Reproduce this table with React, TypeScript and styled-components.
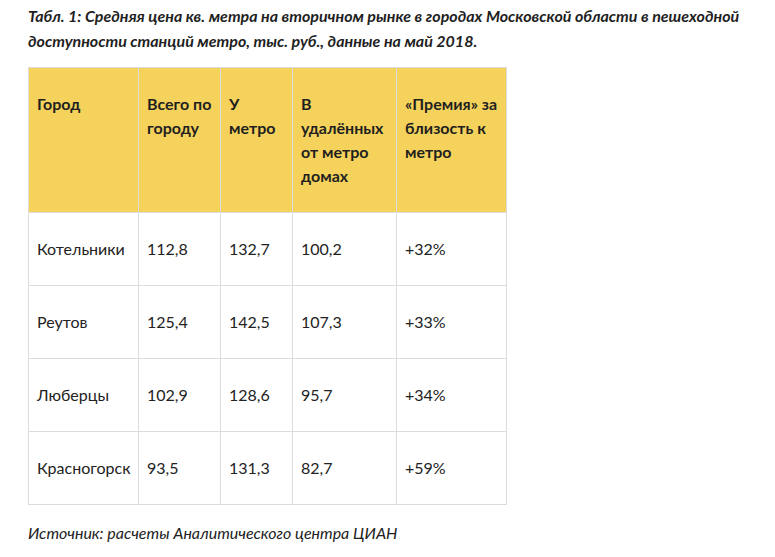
import React from "react";
import styled, { createGlobalStyle } from "styled-components";

const Global = createGlobalStyle`
  html, body { margin: 0; padding: 0; background: #ffffff; }
  body { font-family: Lato, "Noto Sans", sans-serif; color: #222222; }
`;

const Page = styled.div`
  padding: 3px 28px 0 28px;
`;

const Caption = styled.p`
  margin: 0;
  font-size: 16px;
  line-height: 25px;
  font-weight: 700;
  font-style: italic;
  color: #1f1f1f;
  max-width: 720px;
`;

const Table = styled.table`
  margin-top: 14px;
  border-collapse: collapse;
  table-layout: fixed;
  width: 479px;
  font-size: 16px;
  line-height: 24px;
`;

const HeadCell = styled.th`
  background: #f5d25b;
  border: 1px solid #dcdcdc;
  padding: 24px 8px 24px 8px;
  text-align: left;
  vertical-align: top;
  font-weight: 700;
  color: #1f1f1f;
`;

const Cell = styled.td`
  border: 1px solid #dcdcdc;
  padding: 24px 8px;
  text-align: left;
  vertical-align: middle;
  font-weight: 400;
  color: #222222;
  white-space: nowrap;
`;

const Source = styled.p`
  margin: 16px 0 0 0;
  font-size: 16px;
  line-height: 24px;
  font-style: italic;
  color: #222222;
`;

const widths = [110, 82, 72, 104, 110];
const heads = [
  "Город",
  "Всего по городу",
  "У метро",
  "В удалённых от метро домах",
  "«Премия» за близость к метро",
];
const rows = [
  ["Котельники", "112,8", "132,7", "100,2", "+32%"],
  ["Реутов", "125,4", "142,5", "107,3", "+33%"],
  ["Люберцы", "102,9", "128,6", "95,7", "+34%"],
  ["Красногорск", "93,5", "131,3", "82,7", "+59%"],
];

export default function App() {
  return (
    <Page>
      <Global />
      <Caption>
        Табл. 1: Средняя цена кв. метра на вторичном рынке в городах Московской области в пешеходной
        доступности станций метро, тыс. руб., данные на май 2018.
      </Caption>
      <Table>
        <colgroup>
          {widths.map((w, i) => (
            <col key={i} style={{ width: w }} />
          ))}
        </colgroup>
        <thead>
          <tr>
            {heads.map((h) => (
              <HeadCell key={h}>{h}</HeadCell>
            ))}
          </tr>
        </thead>
        <tbody>
          {rows.map((r) => (
            <tr key={r[0]}>
              {r.map((c, i) => (
                <Cell key={i}>{c}</Cell>
              ))}
            </tr>
          ))}
        </tbody>
      </Table>
      <Source>Источник: расчеты Аналитического центра ЦИАН</Source>
    </Page>
  );
}
